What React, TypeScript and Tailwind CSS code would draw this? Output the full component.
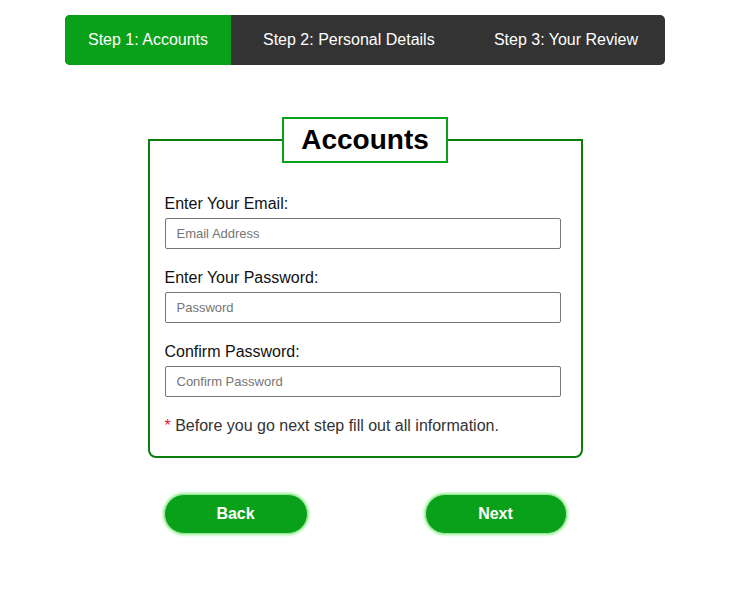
import { useState } from "react";

const steps = ["Step 1: Accounts", "Step 2: Personal Details", "Step 3: Your Review"];

function Field({ label, placeholder, type }: { label: string; placeholder: string; type: string }) {
  return (
    <div className="mb-[20px]">
      <label className="block text-[16px] leading-[18px] text-[#111] mb-[5px]">{label}</label>
      <input
        type={type}
        placeholder={placeholder}
        className="block w-[396px] h-[31px] border border-[#767676] rounded-[2px] pl-[11px] text-[13px] text-[#333] placeholder:text-[#757575] outline-none"
      />
    </div>
  );
}

export default function App() {
  const [active] = useState(0);

  return (
    <div className="w-[730px] pt-[15px] font-['Liberation_Sans',Arial,sans-serif] bg-white min-h-[589px]">
      <div className="mx-auto w-[600px] h-[50px] flex items-stretch bg-[#333] rounded-[5px] overflow-hidden text-white text-[16px]">
        <div className="w-[166px] flex items-center justify-center bg-[#0aa11a]">{steps[0]}</div>
        <div className={`flex items-center ml-[32px] ${active === 1 ? "bg-[#0aa11a]" : ""}`}>{steps[1]}</div>
        <div className="flex items-center ml-auto mr-[27px]">{steps[2]}</div>
      </div>

      <fieldset className="mx-auto mt-[52px] w-[435px] border-2 border-[#0a7d0a] rounded-b-[8px] pt-[32px]">
        <legend className="mx-auto border-2 border-[#0aa11a] px-[17px] py-[5px] text-[28px] leading-[32px] font-bold text-black">
          Accounts
        </legend>
        <div className="pl-[15px]">
          <Field label="Enter Your Email:" placeholder="Email Address" type="email" />
          <Field label="Enter Your Password:" placeholder="Password" type="password" />
          <Field label="Confirm Password:" placeholder="Confirm Password" type="password" />
          <p className="text-[16px] leading-[18px] text-[#333] mb-[21px]">
            <span className="text-[#e0202a]">*</span> Before you go next step fill out all information.
          </p>
        </div>
      </fieldset>

      <div className="mx-auto w-[435px] px-[16px] mt-[36px] flex justify-between">
        <button className="w-[144px] h-[40px] rounded-full bg-[#0aa11a] border border-[#9be89b] shadow-[0_0_3px_1px_#90ee90] text-white font-bold text-[16px]">
          Back
        </button>
        <button className="w-[142px] h-[40px] rounded-full bg-[#0aa11a] border border-[#9be89b] shadow-[0_0_3px_1px_#90ee90] text-white font-bold text-[16px]">
          Next
        </button>
      </div>
    </div>
  );
}
